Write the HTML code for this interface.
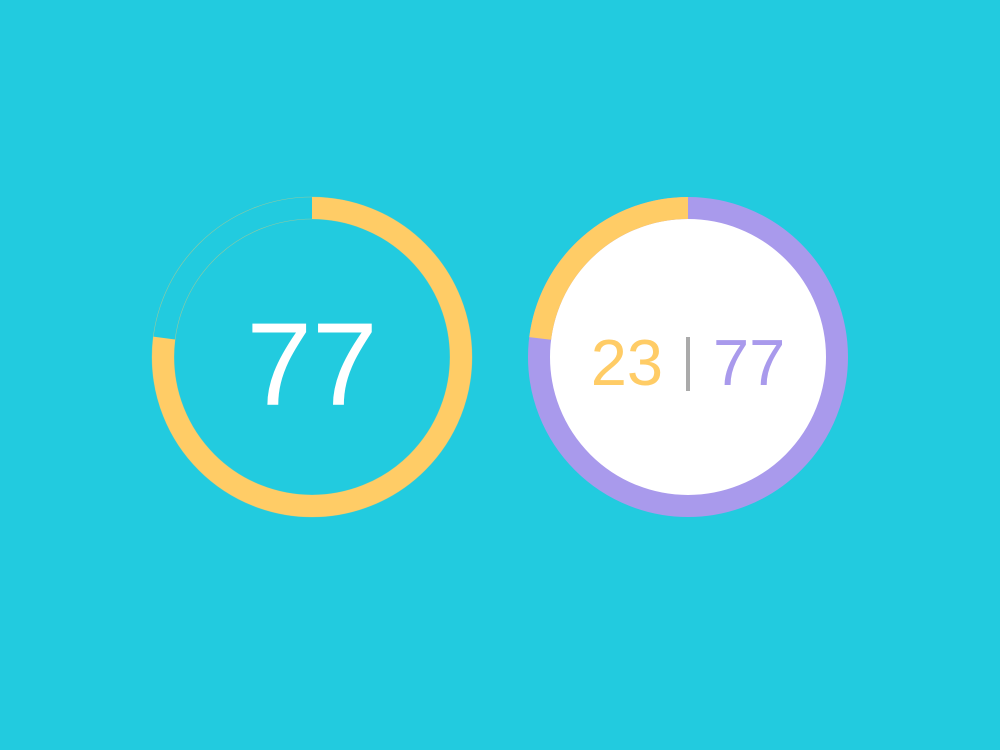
<!DOCTYPE html>
<html><head><style>
html,body{margin:0;padding:0;background:#22cbdf;width:1000px;height:750px;overflow:hidden}
svg{position:absolute;left:0;top:0}
</style></head><body>
<svg width="1000" height="750" viewBox="0 0 1000 750">
  <rect width="1000" height="750" fill="#22cbdf"/>
  <!-- left -->
  <circle cx="312" cy="357" r="160" fill="none" stroke="#ffcc66" stroke-width="0.6" opacity="0.5"/>
  <circle cx="312" cy="357" r="138" fill="none" stroke="#ffcc66" stroke-width="0.6" opacity="0.5"/>
  <circle cx="312" cy="357" r="149" fill="none" stroke="#ffcc66" stroke-width="22"
    stroke-dasharray="720.9 1000" transform="rotate(-90 312 357)"/>
  <text x="312" y="405" text-anchor="middle" font-family="Liberation Sans, sans-serif" font-size="118" fill="#fff">77</text>
  <!-- right -->
  <circle cx="688" cy="357" r="149" fill="#fff"/>
  <circle cx="688" cy="357" r="149" fill="none" stroke="#a99aec" stroke-width="22"/>
  <circle cx="688" cy="357" r="149" fill="none" stroke="#ffcc66" stroke-width="22"
    stroke-dasharray="215.3 1000" transform="rotate(-90 688 357) scale(1,-1) translate(0,-714)"/>
  <text x="663" y="385" text-anchor="end" font-family="Liberation Sans, sans-serif" font-size="65" fill="#ffcc66">23</text>
  <rect x="686" y="337" width="4" height="54" fill="#aaaaaa"/>
  <text x="713" y="385" font-family="Liberation Sans, sans-serif" font-size="65" fill="#a99aec">77</text>
</svg>
</body></html>
